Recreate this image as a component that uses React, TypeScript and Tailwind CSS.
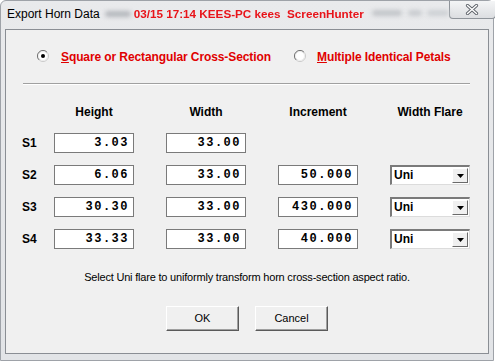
// ── Export Horn Data dialog (Win7 basic frame, classic controls) ─────────────

const rows = [
    { label: "S1", height: "3.03", width: "33.00", increment: null as string | null },
    { label: "S2", height: "6.06", width: "33.00", increment: "50.000" },
    { label: "S3", height: "30.30", width: "33.00", increment: "430.000" },
    { label: "S4", height: "33.33", width: "33.00", increment: "40.000" },
];

function Radio({ checked }: { checked?: boolean }) {
    return (
        <svg width="12" height="12" viewBox="0 0 12 12" className="shrink-0">
            <circle cx="6" cy="6" r="5.5" fill="#fff" stroke="#c8c8c8" />
            <path d="M2.1 9.9 A5.5 5.5 0 0 1 9.9 2.1" fill="none" stroke="#6e6e6e" />
            <circle cx="6" cy="6" r="4.5" fill="none" stroke="#ececec" />
            {checked && <circle cx="6" cy="6" r="2" fill="#000" />}
        </svg>
    );
}

function NumBox({ value }: { value: string }) {
    return (
        <div className="w-[80px] h-[20px] bg-white border border-[#7a7a7a] flex items-center justify-end pr-[4px] font-['Liberation_Mono',monospace] font-bold text-[12px] tracking-[1.5px] leading-none">
            {value}
        </div>
    );
}

function FlareSelect() {
    return (
        <div className="w-[80px] h-[20px] bg-white flex border-t-2 border-l-2 border-b border-r border-t-[#7a7a7a] border-l-[#7a7a7a] border-b-[#dcdcdc] border-r-[#dcdcdc]">
            <span className="flex-1 pl-[2px] text-[12px] font-bold leading-[17px]">Uni</span>
            <div className="w-[16px] my-[1px] mr-[1px] bg-[#f0f0f0] border border-t-white border-l-white border-b-[#6a6a6a] border-r-[#6a6a6a] flex items-center justify-center">
                <svg width="7" height="4" viewBox="0 0 7 4">
                    <path d="M0 0h7L3.5 4z" fill="#000" />
                </svg>
            </div>
        </div>
    );
}

function Button({ children }: { children: string }) {
    return (
        <button className="w-[73px] h-[25px] bg-[#f0f0f0] border border-t-white border-l-white border-b-[#5a5a5a] border-r-[#5a5a5a] shadow-[inset_-1px_-1px_0_#a0a0a0] text-[11px] text-black">
            {children}
        </button>
    );
}

export default function App() {
    return (
        <div className="w-[495px] h-[361px] bg-white overflow-hidden font-['Liberation_Sans',Arial,sans-serif] text-black">
            <div className="w-[494px] h-[361px] rounded-t-[6px] border border-[#9ea2a8] bg-gradient-to-b from-[#e9eaec] to-[#e2e4e7]">
                {/* Title bar */}
                <div className="h-[28px] flex items-start whitespace-nowrap">
                    <span className="shrink-0 pl-[6px] pt-[6px] text-[12px] leading-[15px]">Export Horn Data</span>
                    <div className="shrink-0 ml-[5px] mt-[10px] w-[26px] h-[6px] rounded bg-[#b5b8bd] blur-[2px]" />
                    <span className="shrink-0 ml-[3px] pt-[5px] text-[11.7px] font-bold leading-[15px] text-[#e8141a] blur-[0.3px] whitespace-pre">
                        03/15 17:14 KEES-PC kees  ScreenHunter
                    </span>
                    <div className="shrink-0 ml-[8px] mt-[9px] w-[30px] h-[6px] rounded bg-[#c2c5c9] blur-[2px]" />
                    <div className="shrink-0 ml-[6px] mt-[9px] w-[14px] h-[6px] rounded bg-[#c8cbcf] blur-[2px]" />
                    <div className="shrink-0 ml-[5px] mt-[9px] w-[22px] h-[6px] rounded bg-[#cdd0d4] blur-[2px]" />
                    {/* Close button */}
                    <div className="shrink-0 ml-auto mr-[5px] w-[47px] h-[18px] rounded-b-[4px] border-x border-b border-[#8f949a] bg-gradient-to-b from-[#f4f5f6] to-[#dcdee1] flex items-center justify-center">
                        <svg width="14" height="11" viewBox="0 0 14 11">
                            <path d="M2.5 1.5 L11.5 9.5 M11.5 1.5 L2.5 9.5" stroke="#5a5f66" strokeWidth="3.2" strokeLinecap="round" />
                            <path d="M2.5 1.5 L11.5 9.5 M11.5 1.5 L2.5 9.5" stroke="#ffffff" strokeWidth="1.5" strokeLinecap="round" />
                        </svg>
                    </div>
                </div>

                {/* Client area */}
                <div className="ml-[4px] w-[484px] h-[325px] border border-[#8a8e94] bg-[#f0f0f0] flex flex-col">
                    {/* Cross-section mode */}
                    <div className="mt-[20px] pl-[31px] flex items-start text-[12px] font-bold leading-[15px] text-[#e00000]">
                        <div className="w-[257px] flex items-start">
                            <Radio checked />
                            <span className="ml-[12px] tracking-[-0.1px]">
                                <span className="underline">S</span>quare or Rectangular Cross-Section
                            </span>
                        </div>
                        <Radio />
                        <span className="ml-[11px] tracking-[-0.1px]">
                            <span className="underline">M</span>ultiple Identical Petals
                        </span>
                    </div>

                    <div className="mt-[18px] ml-[17px] w-[447px] h-0 border-t border-t-[#a0a0a0] border-b border-b-white" />

                    {/* Column headers */}
                    <div className="mt-[20px] pl-[16px] grid grid-cols-[32px_112px_112px_112px_80px] text-[12px] font-bold leading-[15px]">
                        <span />
                        <span className="w-[80px] text-center">Height</span>
                        <span className="w-[80px] text-center">Width</span>
                        <span className="w-[80px] text-center">Increment</span>
                        <span className="w-[80px] text-center">Width Flare</span>
                    </div>

                    {/* Sections */}
                    <div className="mt-[13px] pl-[16px] flex flex-col gap-[12px]">
                        {rows.map((r) => (
                            <div key={r.label} className="grid grid-cols-[32px_112px_112px_112px_80px] items-center h-[20px]">
                                <span className="text-[12px] font-bold leading-[15px]">{r.label}</span>
                                <NumBox value={r.height} />
                                <NumBox value={r.width} />
                                {r.increment ? <NumBox value={r.increment} /> : <span />}
                                {r.increment ? <FlareSelect /> : <span />}
                            </div>
                        ))}
                    </div>

                    <p className="mt-[21px] text-center text-[11px] leading-[14px] tracking-[-0.2px]">
                        Select Uni flare to uniformly transform horn cross-section aspect ratio.
                    </p>

                    <div className="mt-[22px] flex justify-center gap-[16px]">
                        <Button>OK</Button>
                        <Button>Cancel</Button>
                    </div>
                </div>
            </div>
        </div>
    );
}
